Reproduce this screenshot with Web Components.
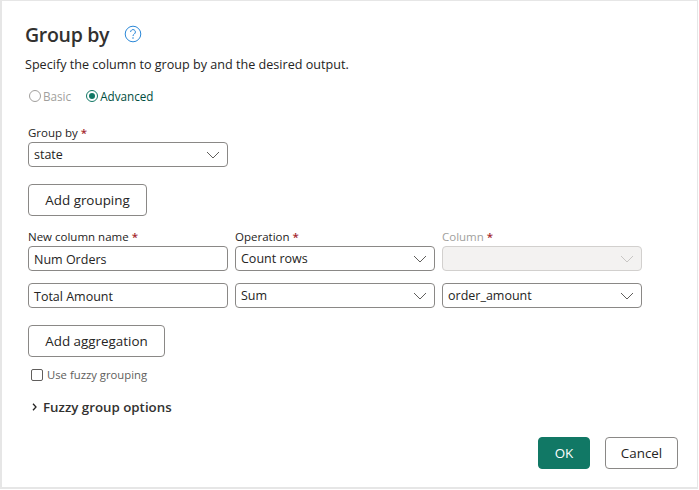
<!DOCTYPE html>
<html>
<head>
<meta charset="utf-8">
<title>Group by</title>
<style>
html,body{margin:0;padding:0;background:#fff;}
body{font-family:"Open Sans","Noto Sans",sans-serif;color:#252423;}
</style>
</head>
<body>
<gb-dialog>
  <gb-header slot="header" heading="Group by" sub="Specify the column to group by and the desired output."></gb-header>
  <div slot="mode" style="display:flex;gap:15px">
    <gb-radio disabled>Basic</gb-radio>
    <gb-radio checked>Advanced</gb-radio>
  </div>
  <gb-field slot="group" label="Group by" style="width:200px"><gb-select value="state"></gb-select></gb-field>
  <gb-button slot="addgroup" width="119">Add grouping</gb-button>
  <div slot="rows" style="display:grid;grid-template-columns:200px 200px 200px;column-gap:7px;row-gap:12px">
    <gb-field label="New column name"><gb-input value="Num Orders"></gb-input></gb-field>
    <gb-field label="Operation"><gb-select value="Count rows"></gb-select></gb-field>
    <gb-field label="Column" disabled><gb-select disabled></gb-select></gb-field>
    <gb-input value="Total Amount"></gb-input>
    <gb-select value="Sum"></gb-select>
    <gb-select value="order_amount"></gb-select>
  </div>
  <gb-button slot="addagg" width="137">Add aggregation</gb-button>
  <gb-check slot="fuzzy">Use fuzzy grouping</gb-check>
  <gb-expander slot="options">Fuzzy group options</gb-expander>
  <gb-button slot="ok" width="52" primary>OK</gb-button>
  <gb-button slot="cancel" width="73">Cancel</gb-button>
</gb-dialog>
<script>
function shadow(el, html){
    el.attachShadow({mode:'open'}).innerHTML = html;
}
const chevron = `<svg width="14" height="8" viewBox="0 0 14 8"><path d="M1 1l6 6 6-6" fill="none" stroke="currentColor" stroke-width="1"/></svg>`;

class GbDialog extends HTMLElement{
    connectedCallback(){
        shadow(this, `<style>
            :host{display:block;box-sizing:border-box;width:698px;height:489px;border:solid #e6e6e6;border-width:1px 1px 2px 2px;padding:22px 19px 0 26px;}
            .head{margin-left:-3px;}
            .mode{margin-top:15px;padding-left:1px;}
            .group{margin-top:21px;}
            .addgroup{margin-top:17px;}
            .rows{margin-top:13px;}
            .addagg{margin-top:17px;}
            .fuzzy{margin-top:10px;padding-left:3px;}
            .options{margin-top:15px;}
            .foot{display:flex;justify-content:flex-end;gap:15px;margin-top:21px;}
        </style>
        <div class="head"><slot name="header"></slot></div>
        <div class="mode"><slot name="mode"></slot></div>
        <div class="group"><slot name="group"></slot></div>
        <div class="addgroup"><slot name="addgroup"></slot></div>
        <div class="rows"><slot name="rows"></slot></div>
        <div class="addagg"><slot name="addagg"></slot></div>
        <div class="fuzzy"><slot name="fuzzy"></slot></div>
        <div class="options"><slot name="options"></slot></div>
        <div class="foot"><slot name="ok"></slot><slot name="cancel"></slot></div>`);
    }
}
class GbHeader extends HTMLElement{
    connectedCallback(){
        shadow(this, `<style>
            :host{display:block;}
            .top{display:flex;align-items:center;gap:15px;height:24px;}
            h1{margin:0;font-size:19.5px;line-height:24px;font-weight:600;color:#323130;letter-spacing:-.3px;}
            svg{display:block;color:#2b88d8;margin-top:-3px;}
            p{margin:9px 0 0;font-size:12.6px;line-height:17px;color:#252423;}
        </style>
        <div class="top"><h1>${this.getAttribute('heading')}</h1>
        <svg width="18" height="18" viewBox="0 0 18 18"><circle cx="9" cy="9" r="7.8" fill="none" stroke="currentColor"/><path d="M6.6 7a2.4 2.4 0 1 1 3.7 2c-.9.6-1.3 1-1.3 2" fill="none" stroke="currentColor"/><circle cx="9" cy="13" r=".8" fill="currentColor"/></svg></div>
        <p>${this.getAttribute('sub')}</p>`);
    }
}
class GbRadio extends HTMLElement{
    connectedCallback(){
        shadow(this, `<style>
            :host{display:inline-flex;align-items:center;gap:2px;font-size:11.7px;line-height:16px;color:#004d40;}
            :host([disabled]){color:#a19f9d;}
            .dot{box-sizing:border-box;width:12px;height:12px;border-radius:50%;border:1px solid #117865;display:flex;align-items:center;justify-content:center;}
            :host([disabled]) .dot{border-color:#a19f9d;}
            :host([checked]) .dot::after{content:"";width:6px;height:6px;border-radius:50%;background:#117865;}
        </style>
        <span class="dot"></span><slot></slot>`);
    }
}
class GbField extends HTMLElement{
    connectedCallback(){
        shadow(this, `<style>
            :host{display:block;}
            label{display:block;font-size:11.5px;line-height:16px;height:16px;margin-bottom:1px;color:#252423;}
            :host([disabled]) label{color:#a19f9d;}
            b{font-weight:600;color:#a4262c;}
        </style>
        <label>${this.getAttribute('label')} <b>*</b></label><slot></slot>`);
    }
}
class GbSelect extends HTMLElement{
    connectedCallback(){
        shadow(this, `<style>
            :host{display:flex;box-sizing:border-box;height:25px;align-items:center;justify-content:space-between;border:1px solid #8a8886;border-radius:4px;padding:0 7px 0 5px;font-size:12.5px;color:#252423;background:#fff;}
            :host([disabled]){background:#f3f2f1;border-color:#d2d0ce;color:#c8c6c4;}
            svg{color:#605e5c;display:block;}
            :host([disabled]) svg{color:#c8c6c4;}
        </style>
        <span>${this.getAttribute('value') || ''}</span>${chevron}`);
    }
}
class GbInput extends HTMLElement{
    connectedCallback(){
        shadow(this, `<style>
            :host{display:flex;box-sizing:border-box;height:25px;align-items:center;border:1px solid #8a8886;border-radius:4px;padding:1px 5px 0;font-size:12.5px;color:#252423;background:#fff;}
        </style>
        <span>${this.getAttribute('value')}</span>`);
    }
}
class GbButton extends HTMLElement{
    connectedCallback(){
        shadow(this, `<style>
            :host{display:flex;box-sizing:border-box;width:${this.getAttribute('width')}px;height:32px;align-items:center;justify-content:center;border:1px solid #8a8886;border-radius:4px;font-size:13.4px;font-weight:500;color:#252423;background:#fff;}
            :host([primary]){background:#117865;border-color:#117865;color:#fff;}
        </style>
        <slot></slot>`);
    }
}
class GbCheck extends HTMLElement{
    connectedCallback(){
        shadow(this, `<style>
            :host{display:flex;align-items:center;gap:4px;font-size:11.3px;line-height:16px;color:#605e5c;}
            .box{box-sizing:border-box;width:12px;height:12px;border:1px solid #605e5c;border-radius:2px;}
        </style>
        <span class="box"></span><slot></slot>`);
    }
}
class GbExpander extends HTMLElement{
    connectedCallback(){
        shadow(this, `<style>
            :host{display:flex;align-items:center;gap:6px;padding-left:4px;font-size:13.3px;line-height:18px;font-weight:600;color:#323130;}
            svg{display:block;}
        </style>
        <svg width="5" height="8" viewBox="0 0 5 8"><path d="M1 .8l3 3.2-3 3.2" fill="none" stroke="#252423" stroke-width="1.3"/></svg><slot></slot>`);
    }
}
customElements.define('gb-dialog', GbDialog);
customElements.define('gb-header', GbHeader);
customElements.define('gb-radio', GbRadio);
customElements.define('gb-field', GbField);
customElements.define('gb-select', GbSelect);
customElements.define('gb-input', GbInput);
customElements.define('gb-button', GbButton);
customElements.define('gb-check', GbCheck);
customElements.define('gb-expander', GbExpander);
</script>
</body>
</html>
